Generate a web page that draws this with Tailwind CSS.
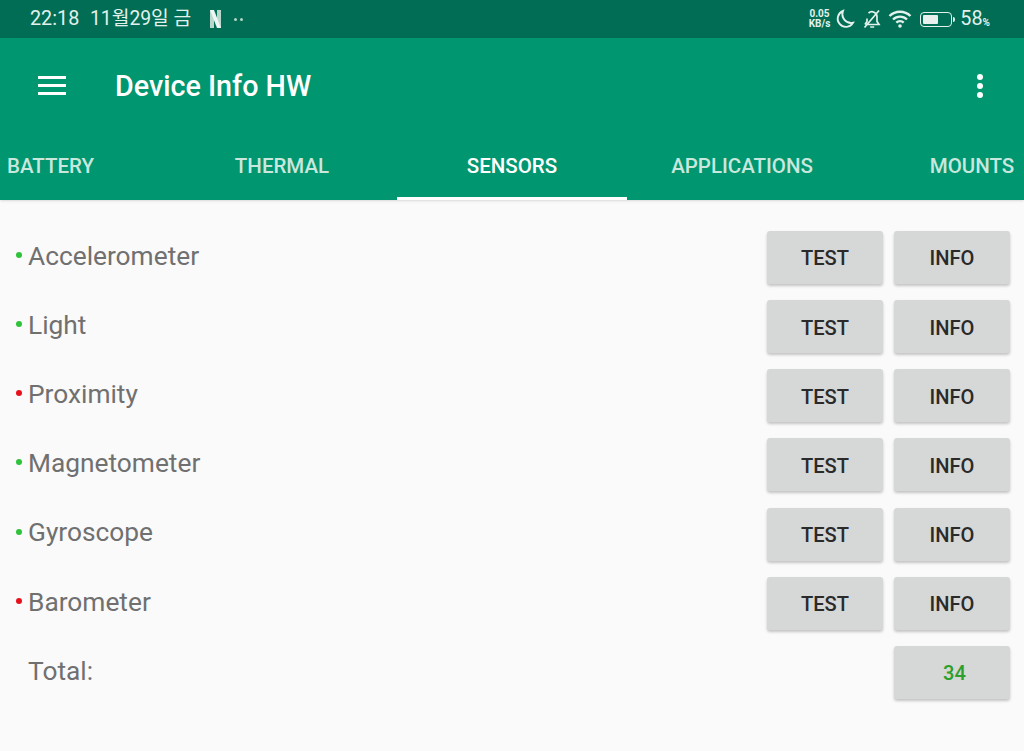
<!DOCTYPE html>
<html lang="ko">
<head>
<meta charset="UTF-8">
<title>Device Info HW</title>
<script src="https://cdn.jsdelivr.net/npm/@tailwindcss/browser@4"></script>
</head>
<body class="h-[751px] w-[1024px] overflow-hidden bg-[#fafafa] font-['Roboto','Noto_Sans_CJK_KR',sans-serif]">

<!-- status bar -->
<div class="h-[38px] bg-[#006d54] flex items-center pl-[30px] pr-[34px] text-[#e3f1ec]">
  <span class="w-[49px] text-[19.8px] leading-none whitespace-nowrap">22:18</span>
  <span class="ml-[11px] w-[101px] text-[19.3px] leading-none whitespace-nowrap">11월29일 금</span>
  <svg class="ml-[19px] w-[11px] h-[18px]" viewBox="0 0 11 18">
    <rect x="0" y="0" width="4" height="18" fill="#b9d8cd"/>
    <rect x="7" y="0" width="4" height="18" fill="#b9d8cd"/>
    <polygon points="0,0 4,0 11,18 7,18" fill="#eef6f3"/>
  </svg>
  <div class="ml-[13px] flex gap-[3px]">
    <div class="w-[3px] h-[3px] rounded-full bg-[#b5d6ca]"></div><div class="w-[3px] h-[3px] rounded-full bg-[#b5d6ca]"></div>
  </div>
  <div class="ml-auto flex items-center">
    <div class="text-[10px] leading-[10px] font-bold text-center mr-[5px]"><div>0.05</div><div>KB/s</div></div>
    <svg class="w-[20px] h-[20px]" viewBox="0 0 20 20" fill="none" stroke="currentColor" stroke-width="1.9"><path d="M8 2A8.2 8.2 0 1 0 18 13.8 8.8 8.8 0 0 1 8 2Z"/></svg>
    <svg class="ml-[7px] w-[20px] h-[20px]" viewBox="0 0 20 20" fill="none" stroke="currentColor" stroke-width="1.7"><path d="M6.5 4.2A5 5 0 0 1 15 8v4.5l2 3H4.5M5 9.5v3l-2 3M8.2 18h4M17 1.5 2.5 18.5"/></svg>
    <svg class="ml-[6px] w-[24px] h-[20px]" viewBox="0 0 24 20" fill="none" stroke="currentColor" stroke-width="2.4"><path d="M1.5 7a15 15 0 0 1 21 0M5 10.5a10 10 0 0 1 14 0M8.3 13.7a5.2 5.2 0 0 1 7.4 0"/><circle cx="12" cy="17" r="1.8" fill="currentColor" stroke="none"/></svg>
    <div class="ml-[8px] flex items-center">
      <div class="w-[32px] h-[15px] rounded-[4px] border-[1.5px] border-[#e3f1ec] p-[2px]"><div class="w-[58%] h-full bg-[#e8efec] rounded-[1px]"></div></div>
      <div class="ml-[1px] w-[2px] h-[5px] bg-[#e3f1ec] rounded-r-sm"></div>
    </div>
    <span class="ml-[5px] text-[19.8px] leading-none">58</span><span class="text-[10px] leading-none self-end mb-[1px] font-bold">%</span>
  </div>
</div>

<!-- app bar -->
<div class="bg-[#009670] shadow-sm">
  <div class="h-[95px] flex items-center pl-[38px] pr-[41px]">
    <div class="w-[28px] flex flex-col gap-[5px]">
      <div class="h-[3px] bg-white"></div><div class="h-[3px] bg-white"></div><div class="h-[3px] bg-white"></div>
    </div>
    <h1 class="ml-[49px] pt-[2px] text-[28.7px] leading-none font-medium text-white">Device Info HW</h1>
    <div class="ml-auto flex flex-col gap-[3px]">
      <div class="w-[6px] h-[6px] rounded-full bg-white"></div><div class="w-[6px] h-[6px] rounded-full bg-white"></div><div class="w-[6px] h-[6px] rounded-full bg-white"></div>
    </div>
  </div>
  <div class="h-[67px] flex justify-center overflow-hidden text-[20.5px] font-medium text-[#c9e7dd]">
    <div class="w-[230px] shrink-0 flex items-center justify-center pt-[2px] pr-[3px] border-b-[3px] border-transparent">BATTERY</div>
    <div class="w-[230px] shrink-0 flex items-center justify-center pt-[2px] border-b-[3px] border-transparent">THERMAL</div>
    <div class="w-[230px] shrink-0 flex items-center justify-center pt-[2px] border-b-[3px] border-white text-white">SENSORS</div>
    <div class="w-[230px] shrink-0 flex items-center justify-center pt-[2px] border-b-[3px] border-transparent">APPLICATIONS</div>
    <div class="w-[230px] shrink-0 flex items-center justify-center pt-[2px] border-b-[3px] border-transparent">MOUNTS</div>
  </div>
</div>

<!-- sensor list -->
<div class="pt-[31px] pl-[16px] pr-[14px] flex flex-col gap-[16.17px] text-[#707070]">
  <div class="h-[53px] flex items-center gap-[12px]">
    <span class="w-[6px] h-[6px] rounded-full bg-[#2fc23a] mb-[5px] -mr-[6px]"></span>
    <span class="text-[26.3px] leading-none pb-[3px]">Accelerometer</span>
    <button class="ml-auto -mr-[1px] w-[116px] h-[53px] pt-[2px] rounded-[3px] bg-[#d6d7d7] shadow-[0_2px_3px_rgba(0,0,0,0.22)] text-[20.1px] font-medium text-[#2a2a2a]">TEST</button>
    <button class="w-[116px] h-[53px] pt-[2px] rounded-[3px] bg-[#d6d7d7] shadow-[0_2px_3px_rgba(0,0,0,0.22)] text-[20.1px] font-medium text-[#2a2a2a]">INFO</button>
  </div>
  <div class="h-[53px] flex items-center gap-[12px]">
    <span class="w-[6px] h-[6px] rounded-full bg-[#2fc23a] mb-[5px] -mr-[6px]"></span>
    <span class="text-[26.3px] leading-none pb-[3px]">Light</span>
    <button class="ml-auto -mr-[1px] w-[116px] h-[53px] pt-[2px] rounded-[3px] bg-[#d6d7d7] shadow-[0_2px_3px_rgba(0,0,0,0.22)] text-[20.1px] font-medium text-[#2a2a2a]">TEST</button>
    <button class="w-[116px] h-[53px] pt-[2px] rounded-[3px] bg-[#d6d7d7] shadow-[0_2px_3px_rgba(0,0,0,0.22)] text-[20.1px] font-medium text-[#2a2a2a]">INFO</button>
  </div>
  <div class="h-[53px] flex items-center gap-[12px]">
    <span class="w-[6px] h-[6px] rounded-full bg-[#e8101c] mb-[5px] -mr-[6px]"></span>
    <span class="text-[26.3px] leading-none pb-[3px]">Proximity</span>
    <button class="ml-auto -mr-[1px] w-[116px] h-[53px] pt-[2px] rounded-[3px] bg-[#d6d7d7] shadow-[0_2px_3px_rgba(0,0,0,0.22)] text-[20.1px] font-medium text-[#2a2a2a]">TEST</button>
    <button class="w-[116px] h-[53px] pt-[2px] rounded-[3px] bg-[#d6d7d7] shadow-[0_2px_3px_rgba(0,0,0,0.22)] text-[20.1px] font-medium text-[#2a2a2a]">INFO</button>
  </div>
  <div class="h-[53px] flex items-center gap-[12px]">
    <span class="w-[6px] h-[6px] rounded-full bg-[#2fc23a] mb-[5px] -mr-[6px]"></span>
    <span class="text-[26.3px] leading-none pb-[3px]">Magnetometer</span>
    <button class="ml-auto -mr-[1px] w-[116px] h-[53px] pt-[2px] rounded-[3px] bg-[#d6d7d7] shadow-[0_2px_3px_rgba(0,0,0,0.22)] text-[20.1px] font-medium text-[#2a2a2a]">TEST</button>
    <button class="w-[116px] h-[53px] pt-[2px] rounded-[3px] bg-[#d6d7d7] shadow-[0_2px_3px_rgba(0,0,0,0.22)] text-[20.1px] font-medium text-[#2a2a2a]">INFO</button>
  </div>
  <div class="h-[53px] flex items-center gap-[12px]">
    <span class="w-[6px] h-[6px] rounded-full bg-[#2fc23a] mb-[5px] -mr-[6px]"></span>
    <span class="text-[26.3px] leading-none pb-[3px]">Gyroscope</span>
    <button class="ml-auto -mr-[1px] w-[116px] h-[53px] pt-[2px] rounded-[3px] bg-[#d6d7d7] shadow-[0_2px_3px_rgba(0,0,0,0.22)] text-[20.1px] font-medium text-[#2a2a2a]">TEST</button>
    <button class="w-[116px] h-[53px] pt-[2px] rounded-[3px] bg-[#d6d7d7] shadow-[0_2px_3px_rgba(0,0,0,0.22)] text-[20.1px] font-medium text-[#2a2a2a]">INFO</button>
  </div>
  <div class="h-[53px] flex items-center gap-[12px]">
    <span class="w-[6px] h-[6px] rounded-full bg-[#e8101c] mb-[5px] -mr-[6px]"></span>
    <span class="text-[26.3px] leading-none pb-[3px]">Barometer</span>
    <button class="ml-auto -mr-[1px] w-[116px] h-[53px] pt-[2px] rounded-[3px] bg-[#d6d7d7] shadow-[0_2px_3px_rgba(0,0,0,0.22)] text-[20.1px] font-medium text-[#2a2a2a]">TEST</button>
    <button class="w-[116px] h-[53px] pt-[2px] rounded-[3px] bg-[#d6d7d7] shadow-[0_2px_3px_rgba(0,0,0,0.22)] text-[20.1px] font-medium text-[#2a2a2a]">INFO</button>
  </div>
  <div class="h-[53px] flex items-center pl-[12px]">
    <span class="text-[26.3px] leading-none pb-[3px]">Total:</span>
    <button class="ml-auto w-[116px] h-[53px] pt-[2px] pl-[5px] rounded-[3px] bg-[#d6d7d7] shadow-[0_2px_3px_rgba(0,0,0,0.22)] text-[20.1px] font-medium text-[#2ca02c]">34</button>
  </div>
</div>
</body>
</html>
